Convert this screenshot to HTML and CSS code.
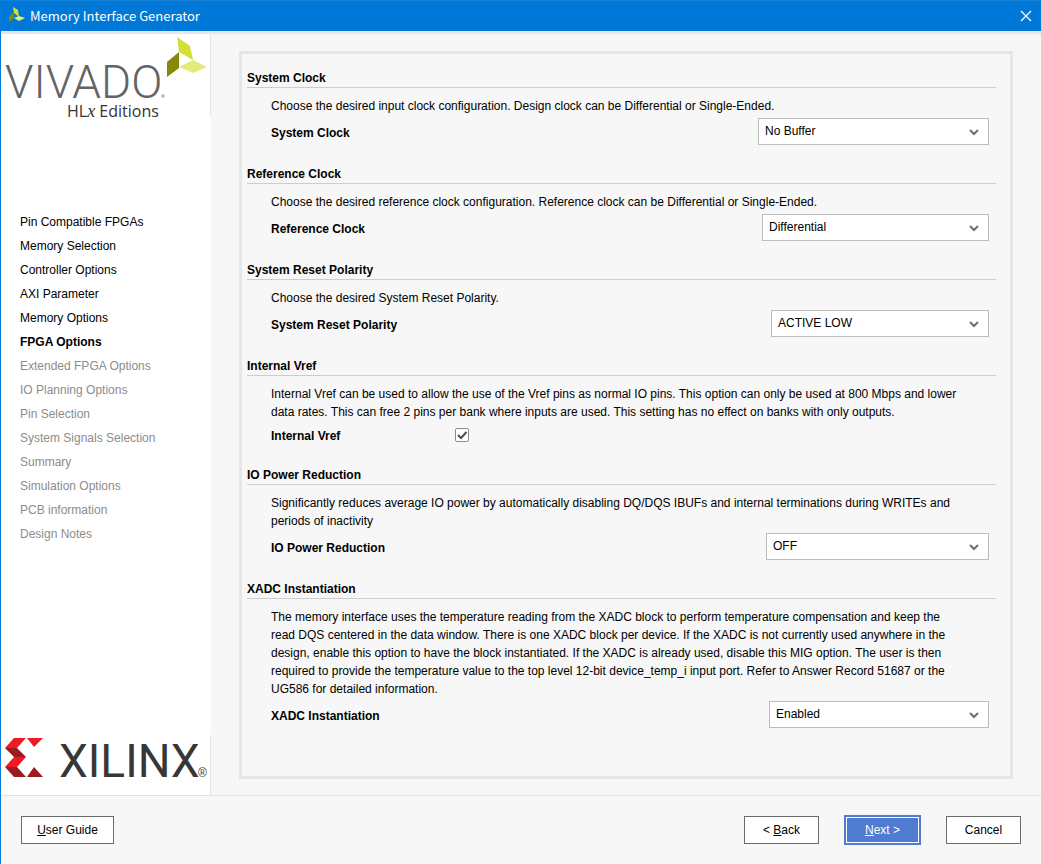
FILE: index.html
```html
<!DOCTYPE html>
<html lang="en">
<head>
<meta charset="utf-8">
<title>Memory Interface Generator</title>
<link rel="stylesheet" href="styles.css">
</head>
<body>
<div class="window">
  <header class="titlebar">
    <svg class="app-icon" width="16" height="16" viewBox="0 0 16 16" aria-hidden="true">
      <path d="M4 0 L9 3 L10 10 L5 6Z" fill="#d7e02e"/>
      <path d="M0 9 L5 5 V11 L0 15Z" fill="#848a08"/>
      <path d="M5 11 L10 9 L16 11 L10 14Z" fill="#e4ec7c"/>
    </svg>
    <h1 class="title">Memory Interface Generator</h1>
    <button class="close" type="button" aria-label="Close">
      <svg width="12" height="12" viewBox="0 0 12 12"><path d="M1 1 L11 11 M11 1 L1 11" stroke="#fff" stroke-width="1.2" fill="none"/></svg>
    </button>
  </header>

  <div class="body">
    <aside class="sidebar">
      <div class="brand brand-top">
        <svg width="209" height="84" viewBox="0 0 209 84" role="img" aria-label="Vivado HLx Editions">
          <text class="vivado" x="4" y="64">VIVADO</text>
          <circle cx="162" cy="62" r="1.8" fill="#b5b5b5"/>
          <text class="edition" x="66" y="83">HL<tspan class="edition-x">x</tspan> Editions</text>
          <path d="M176 3 L189 12 L192 26 L178 18Z" fill="#d3df37"/>
          <path d="M178 18 V34 L166 43 V28Z" fill="#848a08"/>
          <path d="M178 33 L192 26 L206 33 L192 39Z" fill="#e3eb7c"/>
        </svg>
      </div>
      <nav class="steps" aria-label="Steps">
        <a class="step" href="#pins">Pin Compatible FPGAs</a>
        <a class="step" href="#memory">Memory Selection</a>
        <a class="step" href="#controller">Controller Options</a>
        <a class="step" href="#axi">AXI Parameter</a>
        <a class="step" href="#memory-options">Memory Options</a>
        <a class="step current" href="#fpga" aria-current="step">FPGA Options</a>
        <span class="step pending">Extended FPGA Options</span>
        <span class="step pending">IO Planning Options</span>
        <span class="step pending">Pin Selection</span>
        <span class="step pending">System Signals Selection</span>
        <span class="step pending">Summary</span>
        <span class="step pending">Simulation Options</span>
        <span class="step pending">PCB information</span>
        <span class="step pending">Design Notes</span>
      </nav>
      <div class="brand brand-bottom">
        <svg width="209" height="60" viewBox="0 0 209 60" role="img" aria-label="Xilinx">
          <path d="M13 3 H25 L16 13 H4Z" fill="#ed1c24"/>
          <path d="M26 3 H42 L33 12Z" fill="#ed1c24"/>
          <path d="M4 13 H16 L25 22 H13Z" fill="#9b1b21"/>
          <path d="M13 22 H25 L16 32 H4Z" fill="#ed1c24"/>
          <path d="M4 32 H16 L25 42 H13Z" fill="#9b1b21"/>
          <path d="M26 42 H42 L33 32Z" fill="#9b1b21"/>
          <text class="xilinx" x="58" y="42">XILINX</text>
          <text class="registered" x="197" y="42">®</text>
        </svg>
      </div>
    </aside>

    <main class="content">
      <form class="panel" id="options">
        <section class="group">
          <h2 class="heading">System Clock</h2>
          <p class="description">Choose the desired input clock configuration. Design clock can be Differential or Single-Ended.</p>
          <div class="field">
            <label class="label" for="system-clock">System Clock</label>
            <div class="dropdown w-system">
              <select class="select" id="system-clock"><option>No Buffer</option></select>
              <svg class="chevron" width="10" height="7" viewBox="0 0 10 7"><path d="M1 1 L5 5 L9 1" /></svg>
            </div>
          </div>
        </section>
        <section class="group">
          <h2 class="heading">Reference Clock</h2>
          <p class="description">Choose the desired reference clock configuration. Reference clock can be Differential or Single-Ended.</p>
          <div class="field">
            <label class="label" for="reference-clock">Reference Clock</label>
            <div class="dropdown w-reference">
              <select class="select" id="reference-clock"><option>Differential</option></select>
              <svg class="chevron" width="10" height="7" viewBox="0 0 10 7"><path d="M1 1 L5 5 L9 1" /></svg>
            </div>
          </div>
        </section>
        <section class="group">
          <h2 class="heading">System Reset Polarity</h2>
          <p class="description">Choose the desired System Reset Polarity.</p>
          <div class="field">
            <label class="label" for="reset-polarity">System Reset Polarity</label>
            <div class="dropdown w-reset">
              <select class="select" id="reset-polarity"><option>ACTIVE LOW</option></select>
              <svg class="chevron" width="10" height="7" viewBox="0 0 10 7"><path d="M1 1 L5 5 L9 1" /></svg>
            </div>
          </div>
        </section>
        <section class="group">
          <h2 class="heading">Internal Vref</h2>
          <p class="description">Internal Vref can be used to allow the use of the Vref pins as normal IO pins. This option can only be used at 800 Mbps and lower data rates. This can free 2 pins per bank where inputs are used. This setting has no effect on banks with only outputs.</p>
          <div class="field field-check">
            <label class="label" for="internal-vref">Internal Vref</label>
            <span class="check">
              <input class="checkbox" type="checkbox" id="internal-vref" checked>
              <svg class="tick" width="14" height="14" viewBox="0 0 14 14"><path d="M3 7 L6 10 L11.5 4"/></svg>
            </span>
          </div>
        </section>
        <section class="group">
          <h2 class="heading">IO Power Reduction</h2>
          <p class="description">Significantly reduces average IO power by automatically disabling DQ/DQS IBUFs and internal terminations during WRITEs and periods of inactivity</p>
          <div class="field">
            <label class="label" for="io-power">IO Power Reduction</label>
            <div class="dropdown w-power">
              <select class="select" id="io-power"><option>OFF</option></select>
              <svg class="chevron" width="10" height="7" viewBox="0 0 10 7"><path d="M1 1 L5 5 L9 1" /></svg>
            </div>
          </div>
        </section>
        <section class="group">
          <h2 class="heading">XADC Instantiation</h2>
          <p class="description">The memory interface uses the temperature reading from the XADC block to perform temperature compensation and keep the read DQS centered in the data window. There is one XADC block per device. If the XADC is not currently used anywhere in the design, enable this option to have the block instantiated. If the XADC is already used, disable this MIG option. The user is then required to provide the temperature value to the top level 12-bit device_temp_i input port. Refer to Answer Record 51687 or the UG586 for detailed information.</p>
          <div class="field">
            <label class="label" for="xadc">XADC Instantiation</label>
            <div class="dropdown w-xadc">
              <select class="select" id="xadc"><option>Enabled</option></select>
              <svg class="chevron" width="10" height="7" viewBox="0 0 10 7"><path d="M1 1 L5 5 L9 1" /></svg>
            </div>
          </div>
        </section>
      </form>
    </main>
  </div>

  <footer class="footer">
    <button class="button guide" type="button"><u>U</u>ser Guide</button>
    <div class="actions">
      <button class="button" type="button">&lt; <u>B</u>ack</button>
      <button class="button primary" type="submit" form="options"><u>N</u>ext &gt;</button>
      <button class="button" type="button">Cancel</button>
    </div>
  </footer>
</div>
</body>
</html>
```
FILE: styles.css
```css
* {
  box-sizing: border-box;
}

body {
  margin: 0;
  background: #f7f7f7;
  color: #000;
  font-family: "Liberation Sans", Arial, sans-serif;
  font-size: 12px;
  line-height: 18px;
}

.window {
  display: flex;
  flex-direction: column;
  min-height: 100vh;
  border-left: 1px solid #0b7bd8;
}

.titlebar {
  display: flex;
  align-items: center;
  height: 34px;
  padding: 0 9px 0 8px;
  background: #0078d7;
  border-top: 1px solid #1683d9;
  border-bottom: 3px solid #e6e6e6;
}

.app-icon {
  margin-bottom: 2px;
}

.title {
  flex: 1;
  margin: 0 0 0 5px;
  color: #fff;
  font-family: "Noto Sans CJK SC", sans-serif;
  font-size: 13px;
  font-weight: 400;
}

.close {
  display: flex;
  padding: 0;
  border: 0;
  background: none;
}

.body {
  display: flex;
  flex: 1;
}

.sidebar {
  display: flex;
  flex-direction: column;
  flex: none;
  width: 210px;
  background: #fff;
}

.brand {
  border-right: 1px solid #e6e6e6;
}

.brand svg {
  display: block;
  overflow: visible;
}

.vivado {
  fill: #636466;
  font-family: Roboto, sans-serif;
  font-size: 46px;
  font-weight: 300;
}

.edition {
  fill: #333;
  font-family: "Open Sans", sans-serif;
  font-size: 16px;
}

.edition-x {
  font-family: "Liberation Serif", serif;
  font-size: 18px;
  font-style: italic;
}

.xilinx {
  fill: #373737;
  font-family: Roboto, sans-serif;
  font-size: 46px;
}

.registered {
  fill: #373737;
  font-family: "Liberation Sans", sans-serif;
  font-size: 12px;
}

.steps {
  display: flex;
  flex-direction: column;
  flex: 1;
  padding: 92px 19px 0;
}

.step {
  color: #000;
  line-height: 24px;
  text-decoration: none;
}

.current {
  font-weight: 700;
}

.pending {
  color: #8c8c8c;
}

.content {
  display: flex;
  flex: 1;
  padding: 17px 28px 16px;
}

.panel {
  flex: 1;
  padding: 15px 14px 25px 5px;
  border: 3px solid #e6e6e6;
}

.group {
  margin-bottom: 20px;
}

.heading {
  margin: 0;
  border-bottom: 1px solid #cdcdcd;
  font-size: 12px;
  font-weight: 700;
}

.description {
  margin: 9px 34px 3px 24px;
}

.field {
  display: flex;
  align-items: center;
  justify-content: space-between;
  margin: 0 7px 0 24px;
}

.label {
  padding-top: 2px;
  font-weight: 700;
}

.dropdown {
  position: relative;
}

.w-system {
  width: 231px;
}

.w-reference {
  width: 227px;
}

.w-reset {
  width: 218px;
}

.w-power {
  width: 223px;
}

.w-xadc {
  width: 220px;
}

.select {
  display: block;
  width: 100%;
  height: 27px;
  padding: 0 24px 2px 6px;
  border: 1px solid #bcbcbc;
  border-radius: 0;
  background: #fff;
  color: #000;
  font: inherit;
  appearance: none;
}

.chevron {
  position: absolute;
  top: 11px;
  right: 10px;
  fill: none;
  stroke: #6e6e6e;
  stroke-width: 2;
  pointer-events: none;
}

.field-check {
  justify-content: flex-start;
  height: 22px;
}

.field-check .label {
  width: 184px;
}

.check {
  position: relative;
  display: flex;
}

.checkbox {
  width: 14px;
  height: 14px;
  margin: 0;
  border: 1px solid #8c8c8c;
  border-radius: 2px;
  background: #fff;
  appearance: none;
}

.tick {
  position: absolute;
  inset: 0;
  fill: none;
  stroke: #4d4d4d;
  stroke-width: 2;
  pointer-events: none;
}

.checkbox:not(:checked) + .tick {
  display: none;
}

.footer {
  display: flex;
  align-items: center;
  justify-content: space-between;
  height: 69px;
  padding: 0 20px;
  border-top: 1px solid #e2e2e2;
}

.actions {
  display: flex;
  align-items: center;
  gap: 25px;
}

.button {
  width: 75px;
  height: 28px;
  padding: 0;
  border: 1px solid #6b6b6b;
  background: #fff;
  color: #000;
  font: inherit;
}

.guide {
  width: 93px;
}

.primary {
  width: 77px;
  height: 30px;
  border: 2px solid #4f7bd0;
  background: #4f7bd0;
  box-shadow: inset 0 0 0 1px #fff;
  color: #fff;
}
```
